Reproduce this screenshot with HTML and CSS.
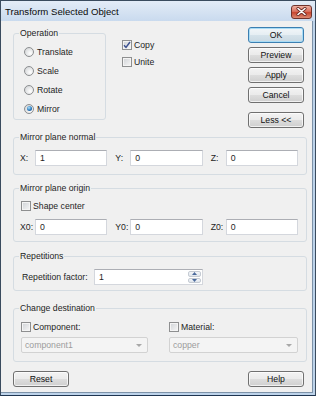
FILE: index.html
```html
<!DOCTYPE html>
<html lang="en">
<head>
    <meta charset="UTF-8">
    <title>Transform Selected Object</title>
    <link rel="stylesheet" href="styles.css">
</head>
<body>
    <div class="window">
        <div class="titlebar">
            <span class="title">Transform Selected Object</span>
            <span class="close">
                <svg width="11" height="9" viewBox="0 0 11 9">
                    <path d="M2 1.5 L9 7.5 M9 1.5 L2 7.5" stroke="#6a2a24" stroke-width="3.2" stroke-linecap="round"/>
                    <path d="M2 1.5 L9 7.5 M9 1.5 L2 7.5" stroke="#fff" stroke-width="1.6" stroke-linecap="round"/>
                </svg>
            </span>
        </div>

        <div class="client">
            <div class="top">
                <fieldset class="group op">
                    <legend>Operation</legend>
                    <div class="radio"><span class="rb"></span>Translate</div>
                    <div class="radio"><span class="rb"></span>Scale</div>
                    <div class="radio"><span class="rb"></span>Rotate</div>
                    <div class="radio"><span class="rb rb-on"></span>Mirror</div>
                </fieldset>

                <div class="checks">
                    <div class="check">
                        <span class="cb">
                            <svg width="8" height="8" viewBox="0 0 8 8"><path d="M1 4.2 L3 6.4 L7 1" fill="none" stroke="#3d5291" stroke-width="1.5"/></svg>
                        </span>Copy
                    </div>
                    <div class="check"><span class="cb"></span>Unite</div>
                </div>

                <div class="buttons">
                    <button class="btn btn-default">OK</button>
                    <button class="btn">Preview</button>
                    <button class="btn">Apply</button>
                    <button class="btn">Cancel</button>
                    <button class="btn btn-less">Less &lt;&lt;</button>
                </div>
            </div>

            <fieldset class="group normal">
                <legend>Mirror plane normal</legend>
                <div class="xyz">
                    <div class="field"><span class="lbl">X:</span><span class="input">1</span></div>
                    <div class="field"><span class="lbl">Y:</span><span class="input">0</span></div>
                    <div class="field"><span class="lbl">Z:</span><span class="input">0</span></div>
                </div>
            </fieldset>

            <fieldset class="group origin">
                <legend>Mirror plane origin</legend>
                <div class="check shape"><span class="cb"></span>Shape center</div>
                <div class="xyz">
                    <div class="field"><span class="lbl">X0:</span><span class="input">0</span></div>
                    <div class="field"><span class="lbl">Y0:</span><span class="input">0</span></div>
                    <div class="field"><span class="lbl">Z0:</span><span class="input">0</span></div>
                </div>
            </fieldset>

            <fieldset class="group reps">
                <legend>Repetitions</legend>
                <div class="reps-row">
                    <span class="reps-label">Repetition factor:</span>
                    <span class="input spinbox">1
                        <span class="spin">
                            <span class="spin-btn"><svg width="5" height="3" viewBox="0 0 5 3"><path d="M0 3 L2.5 0 L5 3Z" fill="#4b6a9c"/></svg></span>
                            <span class="spin-btn"><svg width="5" height="3" viewBox="0 0 5 3"><path d="M0 0 L2.5 3 L5 0Z" fill="#4b6a9c"/></svg></span>
                        </span>
                    </span>
                </div>
            </fieldset>

            <fieldset class="group dest">
                <legend>Change destination</legend>
                <div class="dest-grid">
                    <div class="check"><span class="cb"></span>Component:</div>
                    <div class="check"><span class="cb"></span>Material:</div>
                    <div class="combo">component1<span class="arrow"></span></div>
                    <div class="combo">copper<span class="arrow"></span></div>
                </div>
            </fieldset>

            <div class="footer">
                <button class="btn">Reset</button>
                <button class="btn">Help</button>
            </div>
        </div>
    </div>
</body>
</html>
```

FILE: styles.css
```css
* {
    box-sizing: border-box;
}
body {
    margin: 0;
    font-family: "Liberation Sans", Arial, sans-serif;
    font-size: 8.7px;
    color: #1e1e1e;
    background: #fff;
}
.window {
    width: 316px;
    height: 396px;
    border: 1px solid #3a4b5e;
    border-bottom-color: #1f3550;
    background: #bdd3ea;
    display: flex;
    flex-direction: column;
}
.titlebar {
    height: 20px;
    flex: none;
    display: flex;
    align-items: center;
    justify-content: space-between;
    padding: 0 3px 0 4px;
    background: linear-gradient(#e3ecf7, #c9daee);
}
.title {
    font-size: 9.6px;
    color: #0a0a0a;
}
.close {
    width: 21px;
    height: 14px;
    margin-top: 1px;
    border: 1px solid #70332c;
    border-radius: 3px;
    background: linear-gradient(#eeb0a2, #d9715f 45%, #c8452f 55%, #dc8a73);
    display: flex;
    align-items: center;
    justify-content: center;
}
.client {
    flex: 1;
    margin: 0 2px 2px 0;
    background: #f0f0f0;
    border-right: 1px solid #7d92a8;
    border-bottom: 1px solid #7d92a8;
    padding: 6px 5px 0 12px;
}

/* group boxes */
.group {
    margin: 0;
    padding: 0 8px 0 5px;
    border: 1px solid #d5dce2;
    border-radius: 3px;
    min-width: 0;
}
.group legend {
    padding: 0 1px;
    line-height: 12px;
}

/* top part */
.top {
    display: flex;
    align-items: flex-start;
}
.op {
    width: 93px;
    padding: 3px 0 1px 5px;
}
.radio {
    height: 19px;
    display: flex;
    align-items: center;
    margin-left: 5px;
}
.rb {
    width: 10px;
    height: 10px;
    border: 1px solid #8c8e90;
    border-radius: 50%;
    margin-right: 3px;
    background: radial-gradient(circle at 65% 65%, #ffffff, #d6d8da 80%);
    display: flex;
    align-items: center;
    justify-content: center;
}
.rb-on::after {
    content: "";
    width: 5px;
    height: 5px;
    border-radius: 50%;
    background: radial-gradient(circle at 40% 35%, #b4e3fb, #2b7cc0 55%, #173f73);
}
.checks {
    margin: 9px 0 0 16px;
}
.check {
    height: 17px;
    display: flex;
    align-items: center;
}
.cb {
    width: 10px;
    height: 10px;
    border: 1px solid #8e8f90;
    margin-right: 2px;
    background: linear-gradient(135deg, #cfd2d6, #f7f7f7);
    box-shadow: inset 0 0 0 1px #f4f4f4;
    display: flex;
    align-items: center;
    justify-content: center;
}
.buttons {
    margin: 0 3px 0 auto;
    width: 56px;
    display: flex;
    flex-direction: column;
    gap: 4px;
}
.btn {
    height: 16px;
    padding: 0;
    font: inherit;
    color: #111;
    border: 1px solid #707070;
    border-radius: 3px;
    background: linear-gradient(#f3f3f3, #ebebeb 48%, #dddddd 52%, #cfcfcf);
    box-shadow: inset 0 0 0 1px rgba(255, 255, 255, 0.7);
}
.btn-default {
    border-color: #3c7fb1;
    box-shadow: inset 0 0 0 1px #a9dcf5;
    background: linear-gradient(#f2f6f9, #e6eef3 48%, #d5e2ea 52%, #c9d8e2);
}
.btn-less {
    margin-top: 5px;
}

/* xyz rows */
.normal {
    margin-top: 3px;
    padding-top: 7px;
    padding-bottom: 8px;
}
.origin {
    margin-top: 7px;
    padding-top: 4px;
    padding-bottom: 6px;
}
.xyz {
    display: flex;
    margin-left: 1px;
}
.field {
    flex: 1;
    display: flex;
    align-items: center;
}
.field + .field {
    margin-left: 8px;
}
.lbl {
    width: 15px;
    flex: none;
}
.input {
    flex: 1;
    height: 16px;
    line-height: 14px;
    padding-left: 4px;
    background: #fff;
    border: 1px solid #d4d7dd;
    border-top-color: #acaeb4;
}
.shape {
    height: 15px;
    margin: 0 0 6px 2px;
}

/* repetitions */
.reps {
    margin-top: 8px;
    padding-top: 7px;
    padding-bottom: 5px;
}
.reps-row {
    display: flex;
    align-items: center;
    margin-left: 3px;
}
.reps-label {
    width: 72px;
}
.spinbox {
    flex: none;
    width: 109px;
    position: relative;
}
.spin {
    position: absolute;
    top: 0;
    right: 0;
    bottom: 0;
    width: 15px;
    display: flex;
    flex-direction: column;
    padding: 1px;
    gap: 1px;
}
.spin-btn {
    flex: 1;
    border: 1px solid #c5cbd3;
    border-radius: 2px;
    background: linear-gradient(#f4f6f9, #dfe5ec);
    display: flex;
    align-items: center;
    justify-content: center;
}

/* destination */
.dest {
    margin-top: 11px;
    padding-top: 6px;
    padding-bottom: 8px;
}
.dest-grid {
    display: grid;
    grid-template-columns: 127px 129px;
    column-gap: 21px;
    margin-left: 2px;
}
.dest-grid .check {
    height: 14px;
    margin-bottom: 3px;
}
.combo {
    height: 16px;
    line-height: 14px;
    padding-left: 3px;
    color: #9c9c9c;
    background: #f4f4f4;
    border: 1px solid #d2d2d2;
    border-radius: 2px;
    display: flex;
    justify-content: space-between;
    align-items: center;
}
.arrow {
    width: 0;
    height: 0;
    margin-right: 5px;
    border-left: 3px solid transparent;
    border-right: 3px solid transparent;
    border-top: 3px solid #a8a8a8;
}

.footer {
    display: flex;
    justify-content: space-between;
    margin-top: 9px;
}
.footer .btn {
    width: 56px;
}
.footer .btn:last-child {
    margin-right: 3px;
}
```
